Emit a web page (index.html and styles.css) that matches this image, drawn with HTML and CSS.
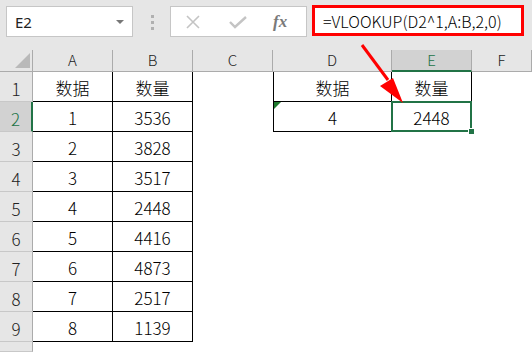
FILE: index.html
```html
<!DOCTYPE html>
<html lang="zh-CN">
<head>
    <meta charset="UTF-8">
    <title>VLOOKUP</title>
    <link rel="stylesheet" href="styles.css">
</head>
<body>
    <div class="toolbar">
        <div class="namebox">
            <span>E2</span>
            <span class="drop"></span>
        </div>
        <div class="grip"><i></i><i></i><i></i></div>
        <div class="fbuttons">
            <svg class="ico" width="16" height="14" viewBox="0 0 16 14">
                <path d="M2 1 L14 13 M14 1 L2 13" stroke="#c4c4c4" stroke-width="1.6" fill="none"/>
            </svg>
            <svg class="ico" width="18" height="14" viewBox="0 0 18 14">
                <path d="M1 7 L6 12 L17 2" stroke="#c4c4c4" stroke-width="2.4" fill="none"/>
            </svg>
            <span class="fx">fx</span>
        </div>
        <div class="formula">=VLOOKUP(D2^1,A:B,2,0)</div>
    </div>

    <div class="sheet">
        <!-- en-tetes -->
        <div class="corner"><span></span></div>
        <div class="colhead">A</div>
        <div class="colhead">B</div>
        <div class="colhead">C</div>
        <div class="colhead">D</div>
        <div class="colhead sel">E</div>
        <div class="colhead">F</div>

        <div class="rowhead">1</div>
        <div class="cell t">数据</div>
        <div class="cell t">数量</div>
        <div class="cell"></div>
        <div class="cell t tl">数据</div>
        <div class="cell t">数量</div>
        <div class="cell"></div>

        <div class="rowhead sel">2</div>
        <div class="cell t">1</div>
        <div class="cell t">3536</div>
        <div class="cell"></div>
        <div class="cell t tl"><span class="flag"></span>4</div>
        <div class="cell t active">2448<span class="handle"></span></div>
        <div class="cell"></div>

        <div class="rowhead">3</div>
        <div class="cell t">2</div>
        <div class="cell t">3828</div>
        <div class="cell"></div><div class="cell"></div><div class="cell"></div><div class="cell"></div>

        <div class="rowhead">4</div>
        <div class="cell t">3</div>
        <div class="cell t">3517</div>
        <div class="cell"></div><div class="cell"></div><div class="cell"></div><div class="cell"></div>

        <div class="rowhead">5</div>
        <div class="cell t">4</div>
        <div class="cell t">2448</div>
        <div class="cell"></div><div class="cell"></div><div class="cell"></div><div class="cell"></div>

        <div class="rowhead">6</div>
        <div class="cell t">5</div>
        <div class="cell t">4416</div>
        <div class="cell"></div><div class="cell"></div><div class="cell"></div><div class="cell"></div>

        <div class="rowhead">7</div>
        <div class="cell t">6</div>
        <div class="cell t">4873</div>
        <div class="cell"></div><div class="cell"></div><div class="cell"></div><div class="cell"></div>

        <div class="rowhead">8</div>
        <div class="cell t">7</div>
        <div class="cell t">2517</div>
        <div class="cell"></div><div class="cell"></div><div class="cell"></div><div class="cell"></div>

        <div class="rowhead">9</div>
        <div class="cell t">8</div>
        <div class="cell t">1139</div>
        <div class="cell"></div><div class="cell"></div><div class="cell"></div><div class="cell"></div>

        <div class="rowhead"></div>
    </div>

    <!-- fleche -->
    <svg class="arrow" width="532" height="352" viewBox="0 0 532 352">
        <path d="M362 45 L388 80" stroke="#ff0000" stroke-width="3" fill="none"/>
        <polygon points="403,103 380,86 393,78" fill="#ff0000"/>
    </svg>
</body>
</html>
```

FILE: styles.css
```css
body {
    margin: 0;
    padding: 0;
    width: 532px;
    height: 352px;
    overflow: hidden;
    background: #ffffff;
    font-family: "Noto Sans CJK SC", sans-serif;
    position: relative;
}

.toolbar {
    height: 50px;
    background: #e6e6e6;
    display: flex;
    align-items: flex-start;
    padding: 6px 0 0 6px;
    box-sizing: border-box;
}

.namebox {
    width: 127px;
    height: 31px;
    background: #fff;
    border: 1px solid #c6c6c6;
    box-sizing: border-box;
    display: flex;
    align-items: center;
    justify-content: space-between;
    padding: 0 8px 0 8px;
    font-family: "Noto Sans", sans-serif;
    font-size: 15px;
    color: #222;
}

.drop {
    width: 0;
    height: 0;
    border-left: 4px solid transparent;
    border-right: 4px solid transparent;
    border-top: 4px solid #777;
}

.grip {
    width: 3px;
    margin: 9px 16px 0 18px;
    display: flex;
    flex-direction: column;
    gap: 3px;
}

.grip i {
    display: block;
    width: 3px;
    height: 3px;
    background: #b0b0b0;
}

.fbuttons {
    width: 137px;
    height: 31px;
    background: #fff;
    border: 1px solid #c6c6c6;
    box-sizing: border-box;
    display: flex;
    align-items: center;
    padding: 0 0 0 14px;
    gap: 28px;
}

.fx {
    font-family: "Liberation Serif", serif;
    font-style: italic;
    font-weight: bold;
    font-size: 17px;
    color: #7a7a7a;
    margin-left: -2px;
}

.formula {
    margin: -1px 0 0 5px;
    width: 212px;
    height: 31px;
    background: #fff;
    border: 3px solid #ff0000;
    box-sizing: border-box;
    display: flex;
    align-items: center;
    padding-left: 8px;
    font-size: 16px;
    font-weight: 300;
    color: #000;
    white-space: nowrap;
}

.sheet {
    display: grid;
    grid-template-columns: 33px 80px 80px 80px 119px 80px 60px;
    grid-template-rows: 22px repeat(9, 30px) 10px;
}

.corner {
    background: #e6e6e6;
    border-right: 1px solid #ababab;
    border-bottom: 1px solid #ababab;
    position: relative;
}

.corner span {
    position: absolute;
    right: 2px;
    bottom: 3px;
    width: 0;
    height: 0;
    border-left: 15px solid transparent;
    border-bottom: 15px solid #b9b9b9;
}

.colhead {
    background: #e6e6e6;
    border-right: 1px solid #ababab;
    border-bottom: 1px solid #ababab;
    box-sizing: border-box;
    display: flex;
    justify-content: center;
    align-items: flex-end;
    padding-bottom: 1px;
    font-size: 15px;
    font-weight: 300;
    color: #222;
}

.colhead.sel {
    background: #d2d2d2;
    color: #217346;
    border-bottom: 2px solid #217346;
    padding-bottom: 0;
}

.rowhead {
    background: #e6e6e6;
    border-right: 1px solid #ababab;
    border-bottom: 1px solid #c8c8c8;
    box-sizing: border-box;
    display: flex;
    justify-content: center;
    align-items: flex-end;
    padding-bottom: 0;
    font-size: 17px;
    font-weight: 300;
    color: #222;
}

.rowhead.sel {
    background: #d2d2d2;
    color: #217346;
    border-right: 2px solid #217346;
}

.cell {
    box-sizing: border-box;
    display: flex;
    justify-content: center;
    align-items: center;
    padding-top: 2px;
    font-size: 17px;
    font-weight: 300;
    color: #000;
    position: relative;
}

.cell.t {
    border-right: 1px solid #000;
    border-bottom: 1px solid #000;
}

.cell.tl {
    border-left: 1px solid #000;
}

.flag {
    position: absolute;
    left: 0;
    top: 0;
    width: 0;
    height: 0;
    border-top: 7px solid #1f7a2e;
    border-right: 7px solid transparent;
}

.active::before {
    content: "";
    position: absolute;
    left: -1px;
    top: -1px;
    right: -1px;
    bottom: -1px;
    border: 2px solid #217346;
}

.handle {
    position: absolute;
    right: -4px;
    bottom: -4px;
    width: 5px;
    height: 5px;
    background: #217346;
    border: 1px solid #fff;
}

.arrow {
    position: absolute;
    left: 0;
    top: 0;
    pointer-events: none;
}
```
